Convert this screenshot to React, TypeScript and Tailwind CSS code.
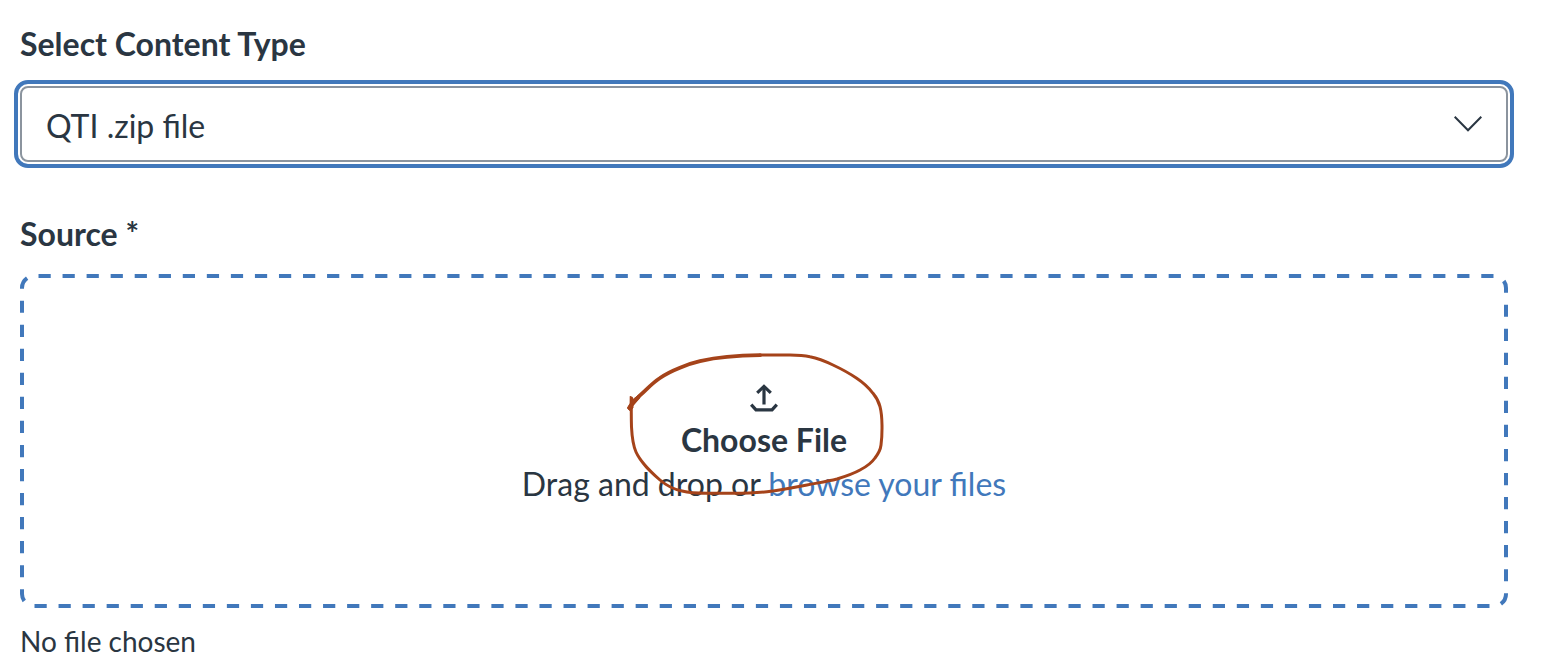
import { useState } from "react";

function UploadIcon() {
  return (
    <svg viewBox="0 0 28 28" className="h-7 w-7" fill="none" stroke="currentColor" strokeWidth="3.2" aria-hidden="true">
      <path d="M14 20.5V2.5" />
      <path d="M7.2 8.8L14 2.4L20.8 8.8" />
      <path d="M1.2 20.6L6 25.9H22L26.8 20.6" />
    </svg>
  );
}

function HandDrawnCircle() {
  return (
    <svg
      viewBox="0 0 264 150"
      className="pointer-events-none absolute -top-[34px] left-[102px] h-[150px] w-[264px] text-[#a5431a]"
      fill="none"
      stroke="currentColor"
      strokeLinecap="round"
      strokeLinejoin="round"
      aria-hidden="true"
    >
      <path
        strokeWidth="3"
        d="M7.5 48C7.2 58 7.2 67 7.5 77C8 87 8.500 94 12 102C17 113 27 122 36 130C43 136 50 139.500 58 141C66 143 74 143.300 83 143.300H109C120 143.300 131 143 143 141.700C157 140 170 137.500 183 135C193 133 203 131.500 213 129C221 126.500 229 124 236 120C242 117 247.500 113 251 108C254.500 103.500 256.500 99.500 257 95C258 88 258.100 82 258 75C257.900 69 257.500 62.500 256 56.700C254.800 52 252.500 47.500 249 43.300C244.500 37.500 239 32.500 232.700 28.300C225.500 23.300 217.500 19 209 15C201.500 11.300 194 8.200 186 6.700C179.500 5.300 173 5.100 166 5.100C156 4.900 146 5 136 5"
      />
      <path strokeWidth="3.8" d="M5.300 57.700L16 45.300C23 39 29 32.500 36 28C42 23.800 49 20.500 56 17.700C62.500 15 69 12.800 76 11.200C85 9 94 7.600 103 6.900C114 5.900 125 5.400 136 5.200" />
      <path fill="currentColor" strokeWidth="1" d="M6.500 46.500L9.500 49L14 45.500L15.500 48L9 54.500V58L5.500 60.500L3.500 58L6 53.500Z" />
    </svg>
  );
}

function DashedFrame() {
  return (
    <svg className="pointer-events-none absolute inset-0 h-full w-full" aria-hidden="true">
      <rect
        x="2"
        y="2"
        rx="12"
        pathLength="3600"
        strokeDasharray="12.2 11.8"
        strokeDashoffset="-4.5"
        className="h-[calc(100%-4px)] w-[calc(100%-4px)] fill-none stroke-[#4178bb] stroke-4"
      />
    </svg>
  );
}

export default function App() {
  const [fileName, setFileName] = useState("");

  return (
    <main className="bg-white pt-6 pr-[35px] pl-5 font-['Lato',sans-serif] text-[32px] leading-10 text-[#2a3642]">
      <label htmlFor="content-type" className="mb-[22px] block font-bold">
        Select Content Type
      </label>
      <div className="relative mb-[52px]">
        <select
          id="content-type"
          defaultValue="qti"
          className="block h-[76px] w-full appearance-none rounded-lg border-2 border-[#8b949e] bg-white pt-1 pr-16 pl-6 outline-4 outline-offset-2 outline-[#4178bb]"
        >
          <option value="qti">QTI .zip file</option>
        </select>
        <svg
          viewBox="0 0 28 16"
          className="pointer-events-none absolute top-[30px] right-[26px] h-4 w-7"
          fill="none"
          stroke="currentColor"
          strokeWidth="2"
          aria-hidden="true"
        >
          <path d="M0.700 0.700L14 14.300L27.300 0.700" />
        </svg>
      </div>

      <div id="source-label" className="mb-5 font-bold">
        Source *
      </div>
      <label
        htmlFor="source-file"
        className="relative flex cursor-pointer flex-col items-center pt-[110px] pb-[102px]"
      >
        <DashedFrame />
        <input
          id="source-file"
          type="file"
          aria-describedby="source-label"
          className="sr-only"
          onChange={(e) => setFileName(e.target.files?.[0]?.name ?? "")}
        />
        <span className="relative flex flex-col items-center leading-11">
          <UploadIcon />
          <span className="mt-1.5 font-bold">Choose File</span>
          <span>
            Drag and drop or <span className="text-[#4178bb]">browse your files</span>
          </span>
          <HandDrawnCircle />
        </span>
      </label>
      <p className="mt-[15px] text-[28px] leading-9">{fileName || "No file chosen"}</p>
    </main>
  );
}
